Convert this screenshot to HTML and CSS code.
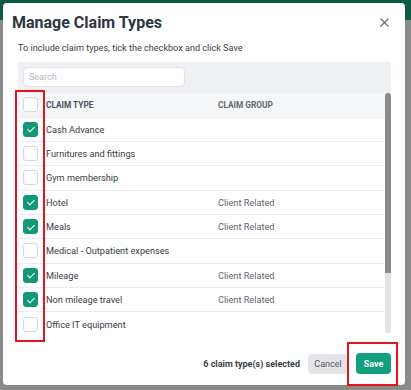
FILE: index.html
```html
<!DOCTYPE html>
<html lang="en">

<head>
    <meta charset="UTF-8">
    <title>Manage Claim Types</title>
    <link rel="stylesheet" href="styles.css">
</head>

<body>
    <!-- dimmed page behind the dialog -->
    <div class="page-bar"></div>

    <div class="modal">
        <div class="modal-head">
            <h2>Manage Claim Types</h2>
            <svg class="close" width="9" height="9" viewBox="0 0 9 9">
                <path d="M0.5 0.5L8.5 8.5M8.5 0.5L0.5 8.5" stroke="#6b6b6b" stroke-width="1.2" fill="none" />
            </svg>
        </div>
        <p class="hint">To include claim types, tick the checkbox and click Save</p>

        <div class="table-wrap">
            <div class="search-bar">
                <input type="text" placeholder="Search">
            </div>
            <div class="table-body">
                <div class="rows">
                    <div class="row head">
                        <span class="box"></span>
                        <span class="type">CLAIM TYPE</span>
                        <span class="group">CLAIM GROUP</span>
                    </div>
                    <div class="row"><span class="box on"></span><span class="type">Cash Advance</span><span class="group"></span></div>
                    <div class="row"><span class="box"></span><span class="type">Furnitures and fittings</span><span class="group"></span></div>
                    <div class="row"><span class="box"></span><span class="type">Gym membership</span><span class="group"></span></div>
                    <div class="row"><span class="box on"></span><span class="type">Hotel</span><span class="group">Client Related</span></div>
                    <div class="row"><span class="box on"></span><span class="type">Meals</span><span class="group">Client Related</span></div>
                    <div class="row"><span class="box"></span><span class="type">Medical - Outpatient expenses</span><span class="group"></span></div>
                    <div class="row"><span class="box on"></span><span class="type">Mileage</span><span class="group">Client Related</span></div>
                    <div class="row"><span class="box on"></span><span class="type">Non mileage travel</span><span class="group">Client Related</span></div>
                    <div class="row last"><span class="box"></span><span class="type">Office IT equipment</span><span class="group"></span></div>
                </div>
                <div class="scroll">
                    <div class="thumb"></div>
                </div>
            </div>
        </div>

        <div class="modal-foot">
            <span class="count">6 claim type(s) selected</span>
            <button class="btn cancel">Cancel</button>
            <button class="btn save">Save</button>
        </div>
    </div>

    <!-- red highlight marks -->
    <div class="mark mark-boxes"></div>
    <div class="mark mark-save"></div>
</body>

</html>
```

FILE: styles.css
```css
body {
    margin: 0;
    width: 411px;
    height: 390px;
    background: #8a8a8a;
    font-family: Roboto, "Liberation Sans", sans-serif;
    position: relative;
    overflow: hidden;
}

.page-bar {
    height: 20px;
    background: #0d5a46;
}

.modal {
    position: absolute;
    left: 3px;
    top: 3px;
    width: 402px;
    height: 382px;
    background: #fff;
    border-radius: 4px;
    box-sizing: border-box;
    padding: 0 14px 0 15px;
}

.modal-head {
    display: flex;
    align-items: center;
    justify-content: space-between;
    height: 38px;
    margin-left: -6px;
}

.modal-head h2 {
    margin: 0;
    font-size: 16px;
    font-weight: 700;
    color: #2f3542;
    padding-top: 1px;
}

.close {
    margin-right: 2px;
}

.hint {
    margin: 0;
    font-size: 9.1px;
    color: #3d4148;
    height: 21px;
    line-height: 15px;
}

.search-bar {
    background: #eef0f3;
    padding: 5px 5px 6px;
}

.search-bar input {
    display: block;
    width: 162px;
    height: 20px;
    box-sizing: border-box;
    border: 1px solid #e1e3e6;
    border-radius: 4px;
    padding: 0 5px;
    font-family: inherit;
    font-size: 9px;
    outline: none;
}

.search-bar input::placeholder {
    color: #b5b8bd;
}

.table-body {
    display: flex;
    height: 243px;
}

.rows {
    flex: 1;
}

.row {
    display: flex;
    align-items: center;
    height: 24.35px;
    box-sizing: border-box;
    border-bottom: 1px solid #ebedf0;
    padding-left: 5px;
    font-size: 9.2px;
    color: #3a3e45;
}

.row.head {
    background: #f5f6f8;
    height: 24.5px;
    font-size: 8.3px;
    font-weight: 700;
    color: #4a5060;
}

.row.last {
    border-bottom: none;
}

.box {
    width: 15px;
    height: 15px;
    box-sizing: border-box;
    border: 1px solid #d3d8de;
    border-radius: 3px;
    background: #fff;
    margin-right: 8px;
    position: relative;
}

.box.on {
    background: #14987a;
    border-color: #14987a;
}

.box.on::after {  /* white tick */
    content: "";
    position: absolute;
    left: 4.5px;
    top: 2.5px;
    width: 3px;
    height: 6px;
    border: solid #fff;
    border-width: 0 1.1px 1.1px 0;
    transform: rotate(45deg);
}

.type {
    width: 172px;
}

.group {
    color: #62666d;
}

.scroll {
    width: 6px;
    background: #e2e2e2;
    border-radius: 3px;
    margin-bottom: 3px;
}

.thumb {
    height: 180px;
    background: #8a8a8a;
    border-radius: 3px 3px 0 0;
}

.modal-foot {
    display: flex;
    align-items: center;
    justify-content: flex-end;
    margin-top: 17px;
    gap: 8px;
}

.count {
    font-size: 9px;
    font-weight: 700;
    color: #3a3e45;
}

.btn {
    border: none;
    border-radius: 4px;
    font-family: inherit;
    font-size: 9px;
    height: 20px;
    padding: 0;
}

.cancel {
    background: #e3e5e9;
    color: #555a62;
    width: 40px;
}

.save {
    background: #13a07f;
    color: #fff;
    font-weight: 700;
    width: 35px;
    height: 21px;
}

.mark {
    position: absolute;
    border: 2px solid #e3141e;
    box-sizing: border-box;
}

.mark-boxes {
    left: 15px;
    top: 90px;
    width: 30px;
    height: 252px;
}

.mark-save {
    left: 347px;
    top: 342px;
    width: 51px;
    height: 44px;
}
```
